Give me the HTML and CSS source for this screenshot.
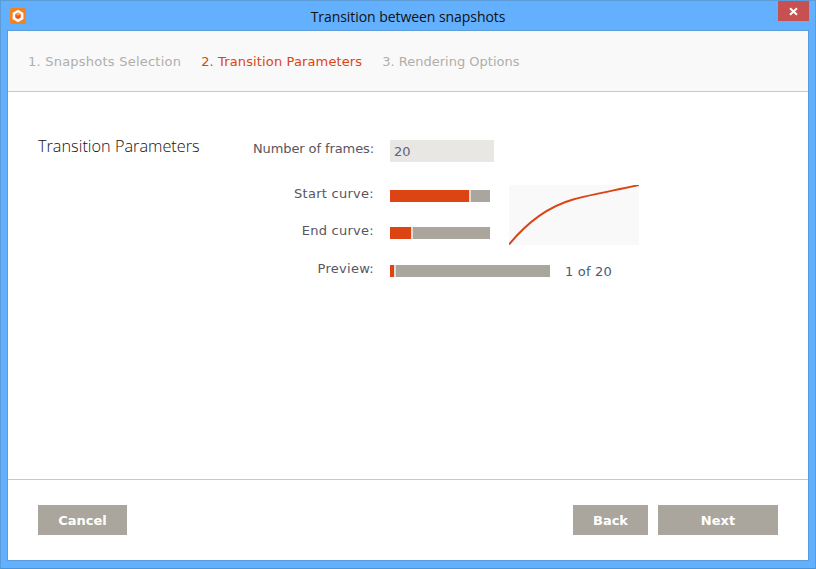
FILE: index.html
```html
<!DOCTYPE html>
<html lang="en">
<head>
<meta charset="utf-8">
<title>Transition between snapshots</title>
<link rel="stylesheet" href="styles.css">
</head>
<body>
<div class="window">
  <div class="titlebar">
    <svg class="app-icon" width="16" height="16" viewBox="0 0 16 16">
      <rect width="16" height="16" rx="2" fill="#f58220"/>
      <path d="M8 1.8 13.4 4.9v6.2L8 14.2 2.6 11.1V4.9z" fill="#fff"/>
      <path d="M8 4.6 10.8 6.2v3.4L8 11.2 5.2 9.6V6.2z" fill="#f0581e"/>
      <path d="M5.2 6.2 8 7.8l2.8-1.6L8 4.6z" fill="#f9a05a"/>
    </svg>
    <div class="title">Transition between snapshots</div>
    <div class="close">
      <svg width="9" height="9" viewBox="0 0 9 9"><path d="M1 1.2 8 7.8M8 1.2 1 7.8" stroke="#fff" stroke-width="2"/></svg>
    </div>
  </div>
  <div class="content">
    <nav class="steps">
      <span class="step first">1. Snapshots Selection</span>
      <span class="step active">2. Transition Parameters</span>
      <span class="step">3. Rendering Options</span>
    </nav>
    <main class="main">
      <h1 class="heading">Transition Parameters</h1>
      <div class="form">
        <div class="row frames-row">
          <span class="label frames">Number of frames:</span>
          <div class="field">20</div>
        </div>
        <div class="curves">
          <div class="curve-rows">
            <div class="row bar-row">
              <span class="label">Start curve:</span>
              <div class="bar"><div class="fill" style="width:79px"></div><div class="knob"></div></div>
            </div>
            <div class="row bar-row">
              <span class="label">End curve:</span>
              <div class="bar"><div class="fill" style="width:21px"></div><div class="knob"></div></div>
            </div>
          </div>
          <svg class="chart" width="130" height="60" viewBox="0 0 130 60">
            <path d="M0 59.5C16 40 38 22 64 14.5C84 9 108 5 130 0" fill="none" stroke="#dc4414" stroke-width="2"/>
          </svg>
        </div>
        <div class="row preview-row">
          <span class="label">Preview:</span>
          <div class="bar wide"><div class="fill" style="width:4px"></div><div class="knob"></div></div>
          <span class="count">1 of 20</span>
        </div>
      </div>
    </main>
    <footer class="footer">
      <button class="btn cancel">Cancel</button>
      <div class="nav-btns">
        <button class="btn back">Back</button>
        <button class="btn next">Next</button>
      </div>
    </footer>
  </div>
</div>
</body>
</html>
```
FILE: styles.css
```css
* { box-sizing: border-box; }
html, body { margin: 0; padding: 0; }
body { width: 816px; height: 569px; overflow: hidden; font-family: "DejaVu Sans", Verdana, sans-serif; font-size: 13px; color: #5a5560; }
.window { width: 816px; height: 569px; background: #62b0fe; border: 1px solid #5a9bd8; border-bottom-color: #4f93d2; padding: 0 6px 7px 6px; display: flex; flex-direction: column; }
.titlebar { height: 29px; flex: none; display: flex; align-items: flex-start; position: relative; }
.app-icon { margin: 7px 0 0 3px; }
.title { position: absolute; left: 0; right: 0; top: 6px; text-align: center; font-family: "Open Sans", "Noto Sans", sans-serif; font-size: 14px; letter-spacing: -0.06px; line-height: 19px; color: #111; }
.close { position: absolute; left: 771px; top: 0; width: 31px; height: 20px; background: #c75050; display: flex; align-items: center; justify-content: center; }
.content { flex: 1; background: #fff; border: 1px solid #5a9bd8; display: flex; flex-direction: column; }
.steps { height: 61px; flex: none; background: #f9f9f9; border-bottom: 1px solid #c8c8c8; padding: 0 0 0 20px; display: flex; align-items: center; gap: 20px; }
.step { color: #b0aeaa; white-space: nowrap; }
.step.first { letter-spacing: 0.23px; }
.step.active { color: #dc4414; letter-spacing: 0.13px; }
.main { flex: 1; display: flex; padding: 43px 0 0 30px; min-height: 0; }
.heading { margin: 0; width: 166px; flex: none; font-family: "Open Sans", "Noto Sans", sans-serif; font-weight: 300; font-size: 16.3px; line-height: 22px; color: #111; white-space: nowrap; }
.form { margin-left: 0; padding-top: 5px; display: flex; flex-direction: column; }
.row { display: flex; }
.label { width: 170px; text-align: right; flex: none; margin-right: 16px; white-space: nowrap; line-height: 18px; letter-spacing: 0.27px; }
.label.frames { letter-spacing: -0.1px; }
.frames-row { height: 45px; flex: none; align-items: flex-start; }
.field { width: 104px; height: 22px; background: #e8e7e3; padding-left: 4px; line-height: 23px; color: #5f6478; }
.curves { display: flex; height: 60px; flex: none; }
.curve-rows { display: flex; flex-direction: column; }
.bar-row { height: 37px; flex: none; align-items: flex-start; }
.bar { width: 100px; height: 12px; margin-top: 5px; background: #aaa69e; display: flex; flex: none; }
.bar.wide { width: 160px; }
.fill { height: 12px; background: #dc4414; }
.knob { width: 2px; height: 12px; background: #dddbd6; }
.chart { display: block; flex: none; margin-left: 19px; background: #f9f9f9; }
.preview-row { margin-top: 15px; flex: none; align-items: flex-start; }
.count { margin-left: 15px; line-height: 22px; color: #4a5a78; margin-top: 1px; letter-spacing: 0.2px; }
.footer { height: 81px; flex: none; border-top: 1px solid #c8c8c8; padding: 25px 30px 0; display: flex; justify-content: space-between; align-items: flex-start; }
.nav-btns { display: flex; gap: 10px; }
.btn { height: 30px; border: 0; padding: 0; background: #aaa69e; color: #fff; font-family: "DejaVu Sans", Verdana, sans-serif; font-weight: 700; font-size: 13px; }
.cancel { width: 89px; }
.back { width: 75px; }
.next { width: 120px; }
```
